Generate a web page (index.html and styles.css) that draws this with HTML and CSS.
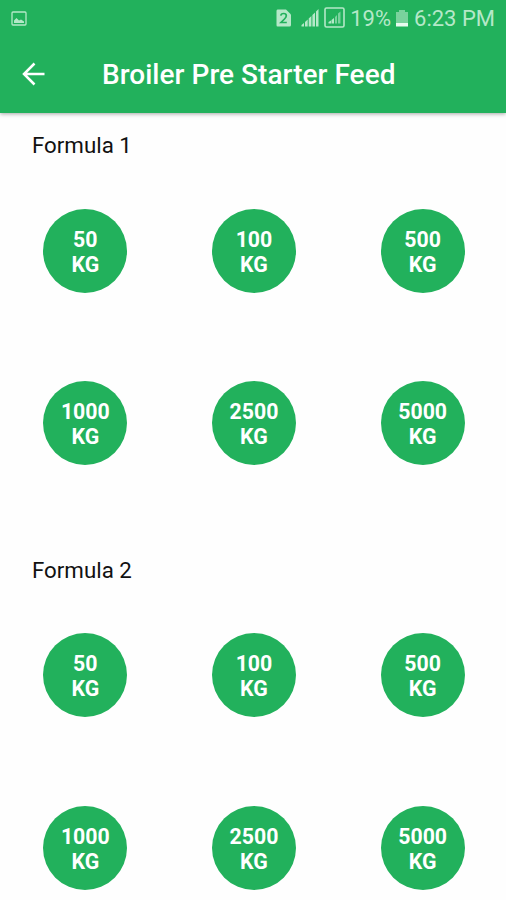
FILE: index.html
```html
<!DOCTYPE html>
<html lang="en">
<head>
    <meta charset="UTF-8">
    <meta name="viewport" content="width=device-width, initial-scale=1.0">
    <title>Broiler Pre Starter Feed</title>
    <link rel="stylesheet" href="styles.css">
</head>
<body>
    <header class="header">
        <div class="status-bar">
            <svg class="icon-image" width="16" height="15" viewBox="0 0 16 15">
                <rect x="1" y="1" width="14" height="13" rx="1" fill="none" stroke="currentColor" stroke-width="1.3"/>
                <path d="M3 12V9.5L5.5 7L8 9.5L10 8.5L13 10.5V12Z" fill="currentColor"/>
            </svg>
            <div class="status-right">
                <svg class="icon-sim" width="16" height="18" viewBox="0 0 16 18">
                    <path d="M1.5 0.5H10L15 5.5V16Q15 17.5 13.5 17.5H1.5Q0.5 17.5 0.5 16V2Q0.5 0.5 1.5 0.5Z" fill="currentColor"/>
                    <path d="M4.8 6.7Q5 4.5 7.6 4.5Q10.3 4.5 10.3 6.8Q10.3 8.2 8.5 10L5 13.5H10.8" fill="none" stroke="#22b15c" stroke-width="1.7"/>
                </svg>
                <svg class="icon-signal" width="18" height="18" viewBox="0 0 18 18">
                    <path d="M0.5 17.5V16L3 14V17.5ZM4 17.5V13L6.7 10.5V17.5ZM7.7 17.5V9.5L10.4 7V17.5ZM11.4 17.5V6L14 3.5V17.5ZM15 17.5V2.5L17.5 0V17.5Z" fill="currentColor"/>
                </svg>
                <svg class="icon-signal-box" width="21" height="21" viewBox="0 0 21 21">
                    <rect x="1" y="1" width="19" height="19" rx="1.5" fill="none" stroke="currentColor" stroke-width="1.6"/>
                    <path d="M4.5 16.5V15L7 13.5V16.5ZM7.5 16.5V13L10 11V16.5Z" fill="currentColor"/>
                    <path d="M11 16.5V10L13 8V16.5ZM14 16.5V6.5L16.5 4.5V16.5Z" fill="currentColor" opacity="0.6"/>
                </svg>
                <span class="percent">19%</span>
                <svg class="icon-battery" width="12" height="17" viewBox="0 0 12 17">
                    <path d="M3 0H9V2H12V13H0V2H3Z" fill="currentColor" opacity="0.6"/>
                    <rect y="13" width="12" height="3.5" fill="#e8fbef"/>
                </svg>
                <span class="time">6:23 PM</span>
            </div>
        </div>
        <div class="toolbar">
            <svg class="back" width="24" height="24" viewBox="0 0 24 24" fill="none" stroke="#fff" stroke-width="2.5">
                <path d="M22.5 12H2.5M12.5 1.5L2 12L12.5 22.5"/>
            </svg>
            <h1 class="title">Broiler Pre Starter Feed</h1>
        </div>
    </header>

    <main>
        <section class="formula">
            <h2 class="formula-name">Formula 1</h2>
            <div class="weights">
                <div class="weight">50<br>KG</div>
                <div class="weight">100<br>KG</div>
                <div class="weight">500<br>KG</div>
                <div class="weight">1000<br>KG</div>
                <div class="weight">2500<br>KG</div>
                <div class="weight">5000<br>KG</div>
            </div>
        </section>
        <section class="formula">
            <h2 class="formula-name">Formula 2</h2>
            <div class="weights">
                <div class="weight">50<br>KG</div>
                <div class="weight">100<br>KG</div>
                <div class="weight">500<br>KG</div>
                <div class="weight">1000<br>KG</div>
                <div class="weight">2500<br>KG</div>
                <div class="weight">5000<br>KG</div>
            </div>
        </section>
    </main>
</body>
</html>
```
FILE: styles.css
```css
* {
    margin: 0;
    padding: 0;
    box-sizing: border-box;
}

body {
    display: flex;
    flex-direction: column;
    height: 100vh;
    overflow: hidden;
    font-family: Roboto, sans-serif;
    background: #fefefe;
    color: #111;
}

.header {
    position: relative;
    z-index: 1;
    flex-shrink: 0;
    height: 113px;
    background: #22b15c;
    box-shadow: 0 1px 4px rgba(0, 0, 0, 0.35);
}

.status-bar {
    display: flex;
    justify-content: space-between;
    align-items: center;
    height: 36px;
    padding: 0 11px;
    color: #b5e8c8;
}

.status-right {
    display: flex;
    align-items: center;
    font-size: 22px;
    line-height: 34px;
}

.icon-sim {
    margin-right: 9px;
}

.icon-signal {
    margin-right: 5px;
}

.icon-signal-box {
    margin-right: 5px;
    margin-bottom: 2px;
}

.percent {
    margin-right: 5px;
}

.percent,
.time {
    padding-top: 2px;
}

.icon-battery {
    margin-right: 6px;
}

.toolbar {
    display: flex;
    align-items: center;
    height: 75px;
    padding-left: 22px;
}

.back {
    margin-right: 56px;
}

.title {
    padding-top: 2px;
    font-size: 28px;
    font-weight: 500;
    letter-spacing: 0.03px;
    color: #fff;
}

main {
    flex: 1;
    min-height: 0;
    overflow: hidden;
}

.formula {
    padding-top: 19.4px;
    margin-bottom: 28px;
}

.formula-name {
    margin-bottom: 6.1px;
    padding-left: 32px;
    font-size: 22.3px;
    font-weight: 400;
    line-height: 26px;
}

.weights {
    display: grid;
    grid-template-columns: repeat(3, 1fr);
    grid-auto-rows: 172.5px;
    place-items: center;
    margin-left: 1px;
    margin-right: -1px;
}

.weight {
    display: flex;
    width: 84px;
    height: 84px;
    padding-top: 2px;
    justify-content: center;
    align-items: center;
    border-radius: 50%;
    background: #22b15c;
    color: #fff;
    font-size: 21.3px;
    font-weight: 700;
    line-height: 25px;
    text-align: center;
}
```
